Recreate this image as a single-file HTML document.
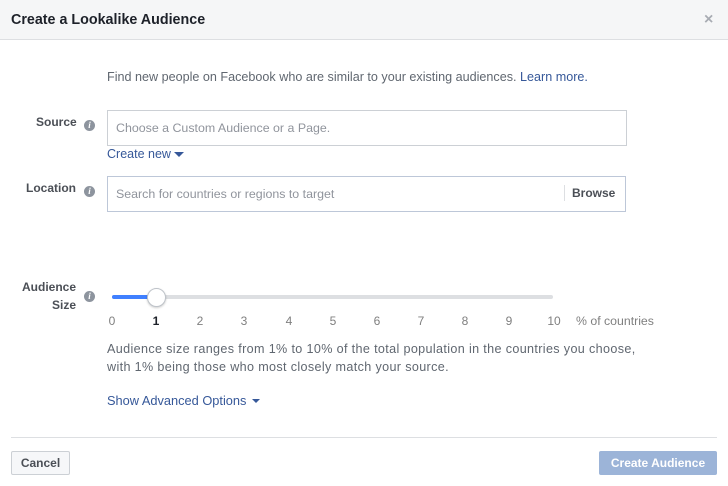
<!DOCTYPE html>
<html><head><style>
body{margin:0;width:728px;height:486px;background:#fff;font-family:"Liberation Sans",Helvetica,Arial,sans-serif;position:relative;overflow:hidden}
.a{position:absolute;white-space:nowrap}
.hdr{position:absolute;left:0;top:0;width:728px;height:39px;background:#f5f6f7;border-bottom:1px solid #dddfe2}
.lbl{font-size:12px;font-weight:bold;color:#4b4f56;text-align:right}
.info{position:absolute;width:11px;height:11px;border-radius:50%;background:#8d949e;color:#fff;font-size:9px;font-weight:bold;font-style:italic;text-align:center;line-height:11px;font-family:"Liberation Serif",serif}
.inp{position:absolute;border:1px solid #ccd0d5;background:#fff;box-sizing:border-box;font-size:12.4px;color:#90949c;padding-left:8px}
.num{position:absolute;top:314px;font-size:12px;color:#7f7f7f;width:20px;margin-left:-10px;text-align:center}
.blue{color:#365899}
</style></head><body>
<div class="hdr"></div>
<div class="a" style="left:11px;top:12px;font-size:14.3px;font-weight:bold;color:#1d2129">Create a Lookalike Audience</div>
<div class="a" style="left:704px;top:11px;font-size:16px;color:#a8acb3;font-weight:bold">×</div>

<div class="a" style="left:107px;top:70px;font-size:12.6px;color:#606770">Find new people on Facebook who are similar to your existing audiences. <span class="blue">Learn more.</span></div>

<div class="a lbl" style="left:36px;top:115px">Source</div>
<div class="info" style="left:84px;top:120px">i</div>
<div class="inp" style="left:107px;top:110px;width:520px;height:36px;line-height:34px">Choose a Custom Audience or a Page.</div>
<div class="a blue" style="left:107px;top:147px;font-size:12.5px">Create new <span style="display:inline-block;width:0;height:0;border-left:5px solid transparent;border-right:5px solid transparent;border-top:5px solid #365899;vertical-align:1px"></span></div>

<div class="a lbl" style="left:26px;top:181px">Location</div>
<div class="info" style="left:84px;top:186px">i</div>
<div class="inp" style="left:107px;top:176px;width:519px;height:36px;line-height:34px;border-color:#bdc7d8">Search for countries or regions to target</div>
<div class="a" style="left:564px;top:185px;width:1px;height:16px;background:#dddfe2"></div>
<div class="a" style="left:572px;top:186px;font-size:12px;font-weight:bold;color:#4b4f56">Browse</div>

<div class="a lbl" style="left:22px;top:278px;line-height:18px">Audience<br>&nbsp;&nbsp;&nbsp;&nbsp;&nbsp;&nbsp;&nbsp;Size</div>
<div class="info" style="left:84px;top:291px">i</div>
<div class="a" style="left:112px;top:295px;width:441px;height:4px;background:#dddfe2;border-radius:2px"></div>
<div class="a" style="left:112px;top:295px;width:44px;height:4px;background:#4080ff;border-radius:2px"></div>
<div class="a" style="left:147px;top:288px;width:17px;height:17px;border-radius:50%;background:#fff;border:1px solid #bec3c9;box-shadow:0 1px 2px rgba(0,0,0,.2)"></div>
<div class="num" style="left:112px">0</div>
<div class="num" style="left:156px;font-weight:bold;color:#1d2129">1</div>
<div class="num" style="left:200px">2</div>
<div class="num" style="left:244px">3</div>
<div class="num" style="left:289px">4</div>
<div class="num" style="left:333px">5</div>
<div class="num" style="left:377px">6</div>
<div class="num" style="left:421px">7</div>
<div class="num" style="left:465px">8</div>
<div class="num" style="left:509px">9</div>
<div class="num" style="left:554px">10</div>
<div class="a" style="left:576px;top:314px;font-size:12.3px;color:#7f7f7f">% of countries</div>

<div class="a" style="left:107px;top:340px;font-size:12.6px;letter-spacing:0.35px;color:#606770;line-height:18px">Audience size ranges from 1% to 10% of the total population in the countries you choose,<br>with 1% being those who most closely match your source.</div>
<div class="a blue" style="left:107px;top:393px;font-size:12.8px">Show Advanced Options <span style="display:inline-block;width:0;height:0;border-left:4px solid transparent;border-right:4px solid transparent;border-top:4px solid #365899;vertical-align:2px;margin-left:2px"></span></div>

<div class="a" style="left:11px;top:437px;width:706px;height:1px;background:#dddfe2"></div>
<div class="a" style="left:11px;top:451px;width:57px;height:22px;border:1px solid #ccd0d5;border-radius:2px;background:#f6f7f9;font-size:12px;font-weight:bold;color:#4b4f56;text-align:center;line-height:22px">Cancel</div>
<div class="a" style="left:599px;top:451px;width:118px;height:24px;border-radius:2px;background:#9cb4d8;font-size:12px;font-weight:bold;color:#fff;text-align:center;line-height:24px">Create Audience</div>
</body></html>
